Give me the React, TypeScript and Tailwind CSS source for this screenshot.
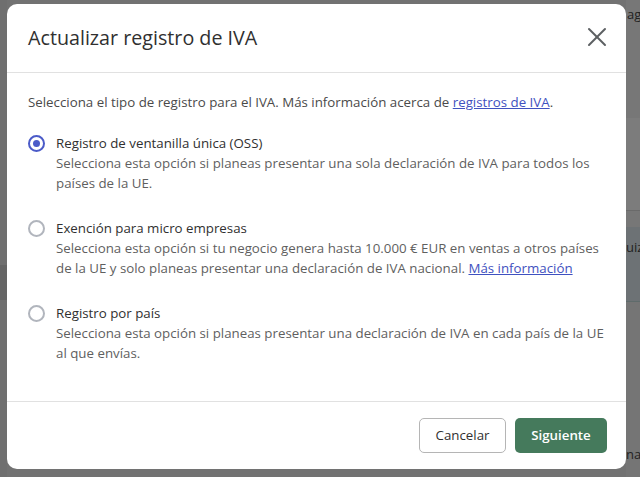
import { X } from "lucide-react"

const options = [
  {
    id: "oss",
    label: "Registro de ventanilla única (OSS)",
    description: "Selecciona esta opción si planeas presentar una sola declaración de IVA para todos los países de la UE.",
    link: null,
  },
  {
    id: "micro",
    label: "Exención para micro empresas",
    description:
      "Selecciona esta opción si tu negocio genera hasta 10.000 € EUR en ventas a otros países de la UE y solo planeas presentar una declaración de IVA nacional.",
    link: "Más información",
  },
  {
    id: "country",
    label: "Registro por país",
    description: "Selecciona esta opción si planeas presentar una declaración de IVA en cada país de la UE al que envías.",
    link: null,
  },
]

function Radio({ checked }: { checked: boolean }) {
  return (
    <span
      className={`mt-[2px] flex h-[17px] w-[17px] shrink-0 items-center justify-center rounded-full border-2 ${
        checked ? "border-[#4b5bc8]" : "border-[#b1b5bd]"
      }`}
    >
      {checked && <span className="h-[7px] w-[7px] rounded-full bg-[#4b5bc8]" />}
    </span>
  )
}

export default function App() {
  const selected = "oss"

  return (
    <div
      className="relative h-[477px] w-[640px] overflow-hidden bg-[#727272]"
      style={{ fontFamily: '"Open Sans", "Noto Sans", Arial, sans-serif' }}
    >
      {/* dimmed page behind the dialog */}
      <div className="flex h-full">
        <div className="flex w-[7px] flex-col">
          <div className="h-[265px] bg-[#6f6f6f]" />
          <div className="h-[35px] bg-[#656565]" />
          <div className="flex-1 bg-[#6f6f6f]" />
        </div>
        <div className="flex-1" />
        <div className="flex w-[14px] flex-col overflow-hidden whitespace-nowrap text-[13px] leading-none text-[#222]">
          <div className="h-[118px] bg-[#777777] pt-[8px] pl-[1px]">ag</div>
          <div className="h-[92px] bg-[#7c7c7c]" />
          <div className="h-[1px] bg-[#6a6a6a]" />
          <div className="h-[16px] bg-[#777777]" />
          <div className="h-[75px] border-b border-[#5f6b6b] bg-[#6d7275] pt-[14px]">uiz</div>
          <div className="flex flex-1 items-end bg-[#757575] pb-[16px]">nac</div>
        </div>
      </div>

      {/* dialog */}
      <div className="absolute left-[7px] top-[4px] flex h-[465px] w-[619px] flex-col rounded-[10px] bg-white">
        <div className="flex h-[69px] items-center justify-between border-b border-[#e1e1e1] pl-[21px] pr-[13px]">
          <h2 className="pb-[1px] text-[19.7px] text-[#303030]">Actualizar registro de IVA</h2>
          <button className="mb-[3px] flex h-[32px] w-[32px] items-center justify-center text-[#5c5f62]">
            <X size={32} strokeWidth={1.5} />
          </button>
        </div>

        <div className="flex-1 px-[21px] pt-[19px] text-[13.3px] leading-[20px]">
          <p className="text-[#4a4a4a]">
            Selecciona el tipo de registro para el IVA. Más información acerca de{" "}
            <a href="#" className="text-[#3f51c0] underline">
              registros de IVA
            </a>
            .
          </p>

          <div className="mt-[21px] flex flex-col gap-[25px]">
            {options.map((o) => (
              <label key={o.id} className="flex gap-[11px]">
                <Radio checked={o.id === selected} />
                <div>
                  <div className="text-[#303030]">{o.label}</div>
                  <div className="text-[#5f5f5f]">
                    {o.description}
                    {o.link && (
                      <>
                        {" "}
                        <a href="#" className="text-[#3f51c0] underline">
                          {o.link}
                        </a>
                      </>
                    )}
                  </div>
                </div>
              </label>
            ))}
          </div>
        </div>

        <div className="flex h-[68px] items-center justify-end gap-[9px] border-t border-[#e1e1e1] pr-[19px]">
          <button className="h-[35px] w-[87px] rounded-[5px] border border-[#b5b5b5] bg-white text-[13.3px] text-[#303030]">
            Cancelar
          </button>
          <button className="h-[35px] w-[92px] rounded-[5px] bg-[#457a5c] text-[13.3px] font-semibold text-white">
            Siguiente
          </button>
        </div>
      </div>
    </div>
  )
}
